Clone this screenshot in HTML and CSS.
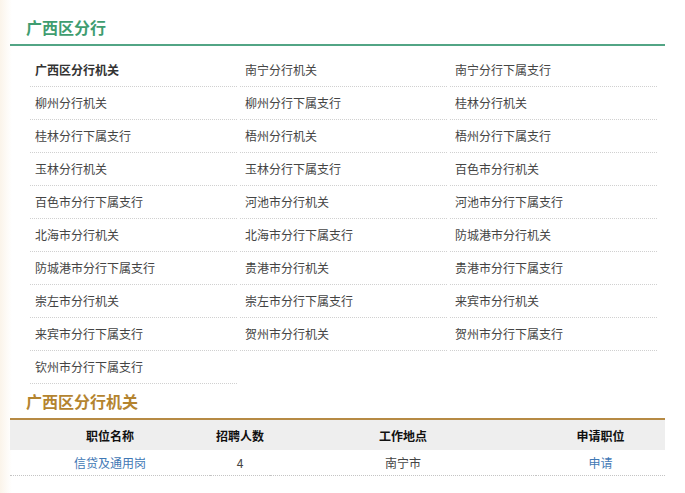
FILE: index.html
```html
<!DOCTYPE html>
<html lang="zh-CN">
<head>
    <meta charset="UTF-8">
    <title>广西区分行</title>
    <link rel="stylesheet" href="styles.css">
</head>
<body>
    <div class="wrap">
        <h2 class="sec-title green">广西区分行</h2>
        <ul class="org-list">
            <li class="cur">广西区分行机关</li>
            <li>南宁分行机关</li>
            <li>南宁分行下属支行</li>
            <li>柳州分行机关</li>
            <li>柳州分行下属支行</li>
            <li>桂林分行机关</li>
            <li>桂林分行下属支行</li>
            <li>梧州分行机关</li>
            <li>梧州分行下属支行</li>
            <li>玉林分行机关</li>
            <li>玉林分行下属支行</li>
            <li>百色市分行机关</li>
            <li>百色市分行下属支行</li>
            <li>河池市分行机关</li>
            <li>河池市分行下属支行</li>
            <li>北海市分行机关</li>
            <li>北海市分行下属支行</li>
            <li>防城港市分行机关</li>
            <li>防城港市分行下属支行</li>
            <li>贵港市分行机关</li>
            <li>贵港市分行下属支行</li>
            <li>崇左市分行机关</li>
            <li>崇左市分行下属支行</li>
            <li>来宾市分行机关</li>
            <li>来宾市分行下属支行</li>
            <li>贺州市分行机关</li>
            <li>贺州市分行下属支行</li>
            <li>钦州市分行下属支行</li>
        </ul>

        <h2 class="sec-title gold">广西区分行机关</h2>
        <table class="job-table">
            <thead>
                <tr>
                    <th class="c1">职位名称</th>
                    <th class="c2">招聘人数</th>
                    <th class="c3">工作地点</th>
                    <th class="c4">申请职位</th>
                </tr>
            </thead>
            <tbody>
                <tr>
                    <td><a href="#">信贷及通用岗</a></td>
                    <td>4</td>
                    <td>南宁市</td>
                    <td><a href="#">申请</a></td>
                </tr>
            </tbody>
        </table>
    </div>
</body>
</html>
```

FILE: styles.css
```css
body {
    margin: 0;
    background: linear-gradient(to right, #fbf4ea 0, #fefcf9 8px, #fff 12px);
    font-family: "Microsoft YaHei", "Noto Sans CJK SC", sans-serif;
    font-size: 12px;
    color: #444;
}
.wrap {
    width: 655px;
    margin-left: 10px;
    padding-top: 14px;
}
.sec-title {
    margin: 0;
    padding-left: 16px;
    font-size: 16px;
    font-weight: bold;
}
.sec-title.green {
    color: #3f9d70;
    line-height: 26px;
    padding-bottom: 4px;
    border-bottom: 2px solid #52a585;
}
.sec-title.gold {
    color: #b4842f;
    line-height: 34px;
    border-bottom: 2px solid #b68a44;
}
.org-list {
    list-style: none;
    margin: 0;
    padding: 8px 0 0 20px;
    display: grid;
    grid-template-columns: repeat(3, 207px);
    column-gap: 3px;
}
.org-list li {
    padding-left: 5px;
    line-height: 32px;
    border-bottom: 1px dotted #d0d0d0;
}
.org-list li.cur {
    font-weight: bold;
    color: #333;
}
.job-table {
    width: 655px;
    border-collapse: collapse;
    table-layout: fixed;
}
.job-table th {
    background: #eeeeee;
    color: #111;
    font-weight: bold;
    height: 30px;
    padding: 0;
}
.job-table .c1 { width: 200px; }
.job-table .c2 { width: 60px; }
.job-table .c3 { width: 266px; }
.job-table td {
    text-align: center;
    height: 25px;
    padding: 0;
    border-bottom: 1px dotted #c4c4c4;
}
.job-table a {
    color: #3f78b5;
    text-decoration: none;
}
```
